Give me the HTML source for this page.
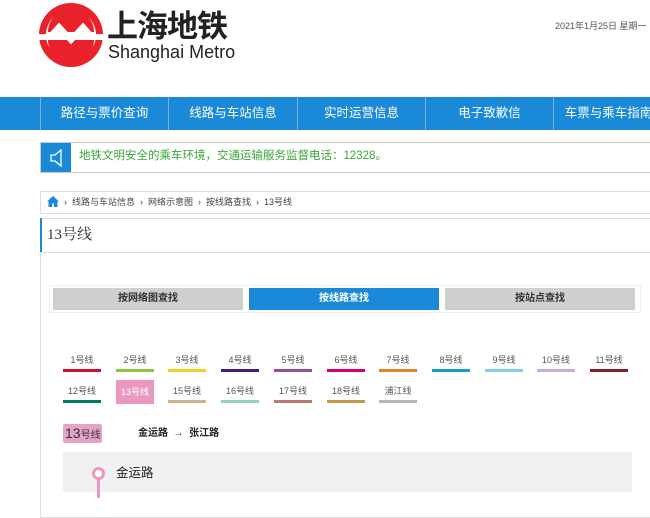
<!DOCTYPE html>
<html><head><meta charset="utf-8"><style>
*{margin:0;padding:0;box-sizing:border-box}
body{width:650px;height:496px;overflow:hidden;background:#fff;font-family:"Liberation Sans","Noto Sans CJK SC",sans-serif;position:relative}
.a{position:absolute;white-space:nowrap;line-height:1}
.nav{position:absolute;left:0;top:97px;width:650px;height:33px;background:#1a8ad8}
.nav div{position:absolute;top:0;height:33px;line-height:33px;color:#fff;font-size:12.5px;text-align:center;border-left:1px solid #6fb6ea}
.ln{position:absolute;width:38px;text-align:center;font-size:9px;color:#555;line-height:1}
.ln i{display:block;height:3px;margin-top:4px}
.tab{position:absolute;top:288px;height:22px;line-height:22px;text-align:center;font-size:10px;font-weight:bold;background:#cfcfcf;color:#333}
</style></head><body>
<svg class="a" style="left:38px;top:2px" width="66" height="66" viewBox="0 0 66 66">
<circle cx="33" cy="33" r="32" fill="#e8212b"/>
<circle cx="33" cy="33" r="25" fill="#fff"/>
<path d="M10 30 A23 23 0 0 1 56 30 Z" fill="#e8212b"/>
<path d="M10 38 A23 23 0 0 0 56 38 Z" fill="#e8212b"/>
<polyline points="0,35 12,35 21,25 33,38 45,25 54,35 66,35" fill="none" stroke="#fff" stroke-width="6"/>
</svg>
<div class="a" style="left:107px;top:11px;font-size:31px;font-weight:bold;color:#222;letter-spacing:-1px">上海地铁</div>
<div class="a" style="left:108px;top:43px;font-size:18px;color:#222">Shanghai Metro</div>
<div class="a" style="left:555px;top:22px;font-size:9px;color:#555">2021年1月25日 星期一</div>
<div class="nav">
<div style="left:40px;width:128px">路径与票价查询</div>
<div style="left:168px;width:129px">线路与车站信息</div>
<div style="left:297px;width:128px">实时运营信息</div>
<div style="left:425px;width:128px">电子致歉信</div>
<div style="left:553px;width:110px">车票与乘车指南</div>
</div>
<div class="a" style="left:40px;top:142px;width:620px;height:31px;border:1px solid #ccc"></div>
<div class="a" style="left:41px;top:143px;width:30px;height:29px;background:#1a8ad8"></div>
<svg class="a" style="left:48px;top:148px" width="18" height="20" viewBox="0 0 18 20"><path d="M3 7h4l6-5v16l-6-5H3z" fill="none" stroke="#fff" stroke-width="1.3"/></svg>
<div class="a" style="left:79px;top:151px;font-size:11.5px;color:#3aa63a">地铁文明安全的乘车环境，交通运输服务监督电话：12328。</div>
<div class="a" style="left:40px;top:191px;width:620px;height:23px;border:1px solid #ddd"></div>
<svg class="a" style="left:47px;top:196px" width="12" height="11" viewBox="0 0 12 11"><path d="M6 0L0 5.5h1.5V11h3.5V7.5h2V11h3.5V5.5H12z" fill="#1a8ad8"/></svg>
<div class="a" style="left:64px;top:198px;font-size:9px;color:#444">›&nbsp; 线路与车站信息 &nbsp;›&nbsp; 网络示意图 &nbsp;›&nbsp; 按线路查找 &nbsp;›&nbsp; 13号线</div>
<div class="a" style="left:40px;top:218px;width:620px;height:300px;border:1px solid #ddd"></div>
<div class="a" style="left:40px;top:218px;width:2px;height:34px;background:#1a8ad8"></div>
<div class="a" style="left:40px;top:252px;width:620px;height:1px;background:#ddd"></div>
<div class="a" style="left:47px;top:228px;font-size:15px;color:#333;font-family:'Liberation Serif','Noto Serif CJK SC',serif">13号线</div>
<div class="a" style="left:49px;top:285px;width:592px;height:28px;border:1px solid #eee"></div>
<div class="tab" style="left:53px;width:190px">按网络图查找</div>
<div class="tab" style="left:249px;width:190px;background:#1a8ad8;color:#fff">按线路查找</div>
<div class="tab" style="left:445px;width:190px">按站点查找</div>

<div class="ln" style="left:63px;top:356px">1号线<i style="background:#c9102f"></i></div>
<div class="ln" style="left:116px;top:356px">2号线<i style="background:#8cc63f"></i></div>
<div class="ln" style="left:168px;top:356px">3号线<i style="background:#f2d01e"></i></div>
<div class="ln" style="left:221px;top:356px">4号线<i style="background:#461d84"></i></div>
<div class="ln" style="left:274px;top:356px">5号线<i style="background:#944d9a"></i></div>
<div class="ln" style="left:327px;top:356px">6号线<i style="background:#d6006f"></i></div>
<div class="ln" style="left:379px;top:356px">7号线<i style="background:#e08427"></i></div>
<div class="ln" style="left:432px;top:356px">8号线<i style="background:#1a9dcd"></i></div>
<div class="ln" style="left:485px;top:356px">9号线<i style="background:#87cee5"></i></div>
<div class="ln" style="left:537px;top:356px">10号线<i style="background:#c6afd4"></i></div>
<div class="ln" style="left:590px;top:356px">11号线<i style="background:#841c31"></i></div>
<div class="ln" style="left:63px;top:387px">12号线<i style="background:#007a60"></i></div>
<div class="a" style="left:116px;top:380px;width:38px;height:24px;background:#e999c0;color:#fff;font-size:9px;text-align:center;line-height:24px">13号线</div>
<div class="ln" style="left:168px;top:387px">15号线<i style="background:#c8b38e"></i></div>
<div class="ln" style="left:221px;top:387px">16号线<i style="background:#98d1c0"></i></div>
<div class="ln" style="left:274px;top:387px">17号线<i style="background:#bb796f"></i></div>
<div class="ln" style="left:327px;top:387px">18号线<i style="background:#c4984f"></i></div>
<div class="ln" style="left:379px;top:387px">浦江线<i style="background:#b5b5b5"></i></div>

<div class="a" style="left:63px;top:424px;width:39px;height:19px;background:#e6a3c7;border-radius:2px;font-size:10px;line-height:19px;color:#333;padding-left:2px"><b style="font-size:14px;font-weight:normal">13</b>号线</div>
<div class="a" style="left:138px;top:429px;font-size:10px;font-weight:bold;color:#222">金运路 &nbsp;→ &nbsp;张江路</div>
<div class="a" style="left:63px;top:452px;width:569px;height:40px;background:#f1f1f1"></div>
<div class="a" style="left:97px;top:478px;width:3px;height:20px;background:#e999c0"></div>
<div class="a" style="left:92px;top:467px;width:13px;height:13px;border:3px solid #e999c0;border-radius:50%;background:#fff"></div>
<div class="a" style="left:116px;top:467px;font-size:12.5px;color:#222">金运路</div>
</body></html>
